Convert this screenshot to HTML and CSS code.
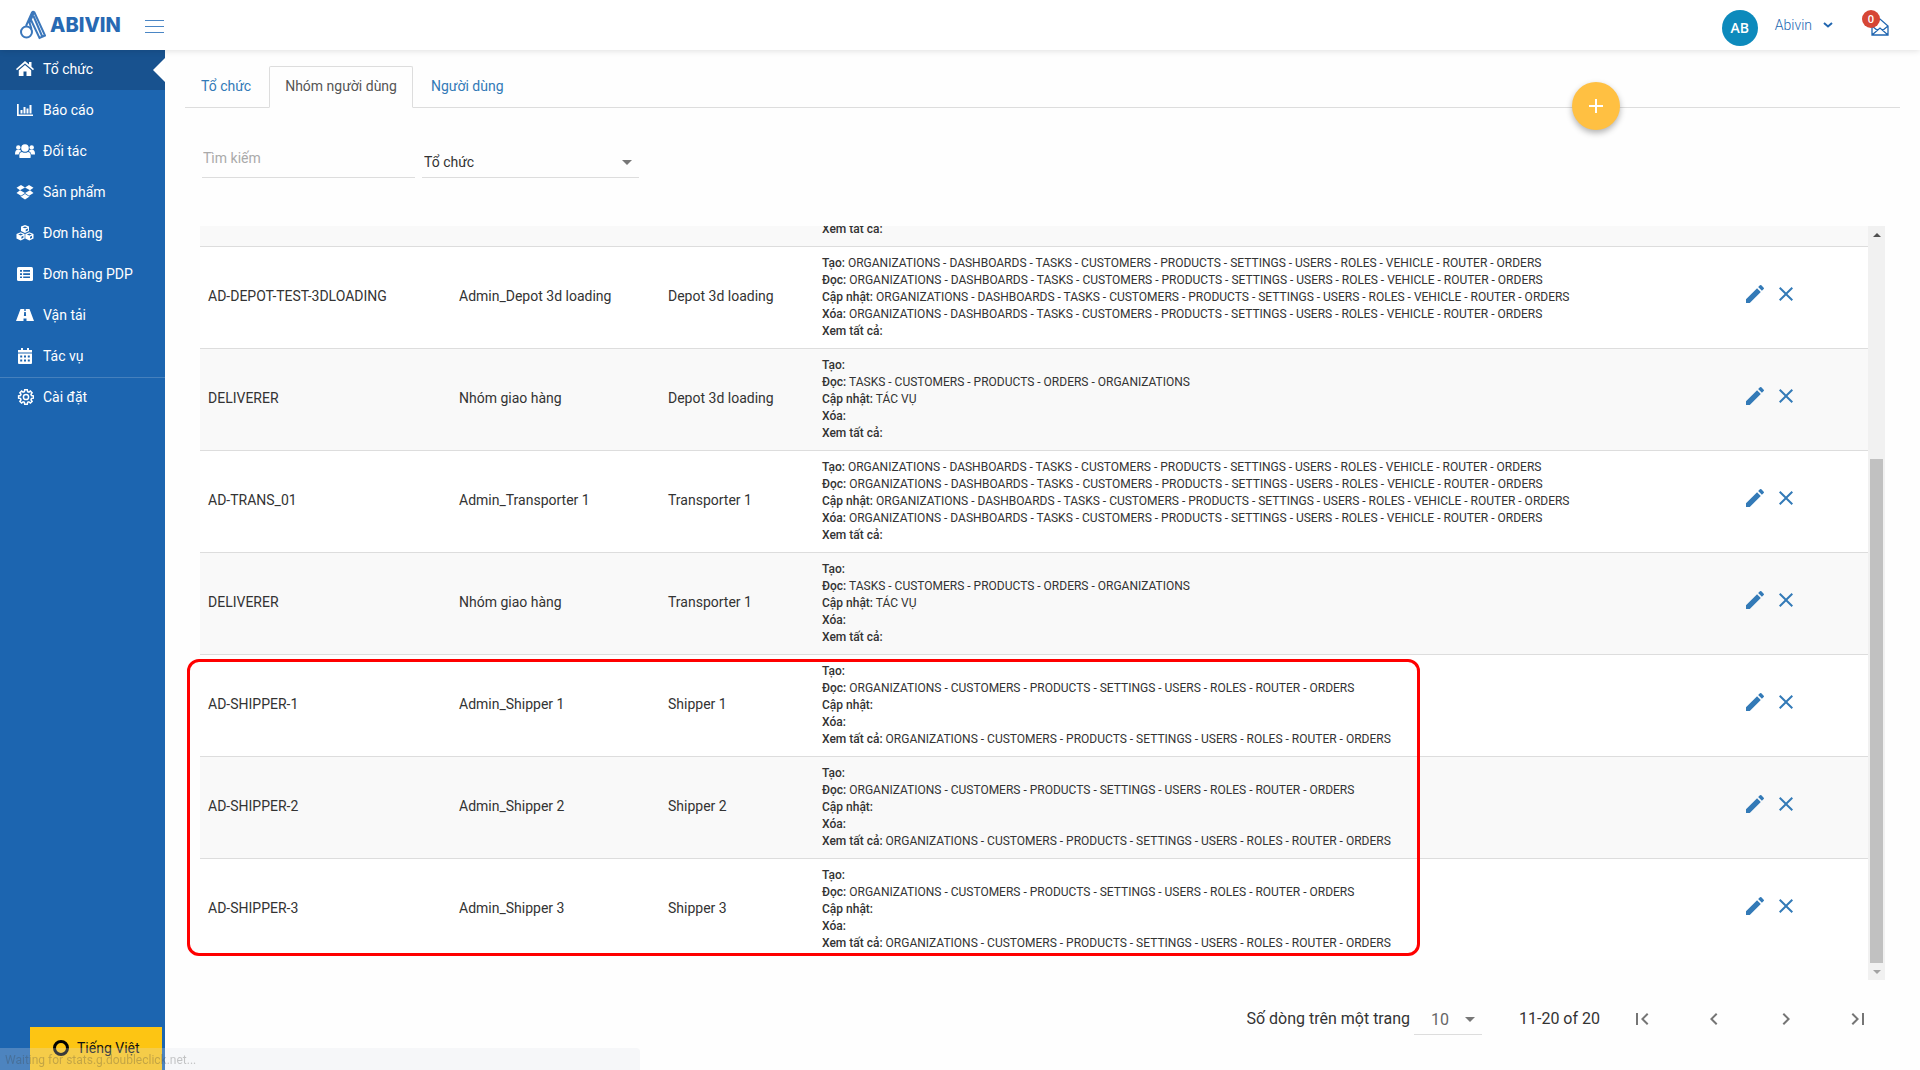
FILE: index.html
```html
<!DOCTYPE html>
<html lang="vi">
<head>
<meta charset="utf-8">
<title>Abivin - Nhóm người dùng</title>
<link rel="stylesheet" href="styles.css">
</head>
<body>
<svg class="sprite" aria-hidden="true">
  <symbol id="edit" viewBox="0 0 24 24"><path d="M3 17.25V21h3.75L17.81 9.94l-3.75-3.75L3 17.25zM20.71 7.04a1 1 0 0 0 0-1.41l-2.34-2.34a1 1 0 0 0-1.41 0l-1.83 1.83 3.75 3.75 1.83-1.83z"/></symbol>
  <symbol id="close" viewBox="0 0 24 24"><path d="M19 6.41 17.59 5 12 10.59 6.41 5 5 6.41 10.59 12 5 17.59 6.41 19 12 13.41 17.59 19 19 17.59 13.41 12z"/></symbol>
</svg>
<header class="topbar">
  <a class="logo" href="#">
    <svg width="26" height="30" viewBox="0 0 26 30" fill="none" stroke="#3b77bb" stroke-width="2"><circle cx="6.500" cy="22" r="5.500"/><path d="M6 16 12 2.500Q13 1 14.500 2.500L25 25.500 19.500 28 11 10M14 2.500 9.500 12.500 11.500 19M13.500 6 22 26"/></svg>
    <span>ABIVIN</span>
  </a>
  <button class="menu" aria-label="Menu"><i></i><i></i><i></i></button>
  <div class="account">
    <span class="avatar">AB</span>
    <button class="user">Abivin <svg width="10" height="6" viewBox="0 0 10 6" fill="none" stroke="#2166b0" stroke-width="2"><path d="M1 1l4 3.500L9 1"/></svg></button>
    <a class="mail" href="#" aria-label="Thông báo">
      <svg width="18" height="18" viewBox="0 0 18 18" fill="none" stroke="#2166b0" stroke-width="1.300"><path d="M1 8 9 1l8 7v9H1zM1 8l5.500 4.500M17 8l-5.500 4.500M1 17l8-7 8 7"/></svg>
      <b>0</b>
    </a>
  </div>
</header>
<div class="body">
  <nav class="sidebar">
    <ul>
      <li class="on"><a href="#"><svg viewBox="0 0 18 16"><path d="M9 0 0 8l1 1.200L9 2.500l8 6.700L18 8l-2.500-2.200V1H13v2.500zM9 4 2.800 9.200V15h4.700v-4.500h3V15h4.700V9.200z"/></svg>Tổ chức</a></li>
      <li><a href="#"><svg viewBox="0 0 18 16"><path d="M1 2h1.700v10.500H17V14H1zM4.500 8h2v3.500h-2zM7.500 5h2v6.500h-2zM10.500 6.500h2v5h-2zM13.500 3h2v8.500h-2z"/></svg>Báo cáo</a></li>
      <li><a href="#"><svg class="wide" viewBox="0 0 20 16"><circle cx="10" cy="5" r="3.800"/><circle cx="3.300" cy="4.500" r="2.200"/><circle cx="16.700" cy="4.500" r="2.200"/><path d="M4.500 15q-1-6 2.500-6 3 1.700 6 0 3.500 0 2.500 6zM0 11.500Q0 7 2 7h3.500l.5 1.200Q4 9 3.600 11.500zM20 11.500Q20 7 18 7h-3.500l-.5 1.200q2 .8 2.400 3.300z"/></svg>Đối tác</a></li>
      <li><a href="#"><svg viewBox="0 0 18 16"><path d="M5 1 .5 3.800 4 6.300 9 3.500zM13 1l4.500 2.800L14 6.300 9 3.500zM4 6.300.5 9 5 11.800 9 9zM14 6.300 17.500 9 13 11.800 9 9zM4 12.200 9 15.500l5-3.300-1 .3L9 10l-4 2.500z"/></svg>Sản phẩm</a></li>
      <li><a href="#"><svg viewBox="0 0 18 16"><path fill-rule="evenodd" d="M9 0l4 1.500V6L9 8 5 6V1.500zM6.500 2.400 9 3.300l2.500-.9L9 1.500zM9.700 4.500v2L12 5.300V3.600zM4.700 7.300l4 1.600v4.600l-4 2-4.200-2V8.900zM2.200 9.500l2.500.9 2.400-.9-2.400-.9zM5.400 11.700v2l2-1v-1.900zM13.300 7.300l4.200 1.600v4.600l-4.200 2-4-2V8.900zM10.900 9.500l2.400.9 2.500-.9-2.500-.9zM14 11.700v2l2-1v-1.900z"/></svg>Đơn hàng</a></li>
      <li><a href="#"><svg viewBox="0 0 18 16"><rect x="1" y="1" width="16" height="14" rx="1.500"/><g fill="#1c65b0"><path d="M4 4h2v1.700H4zM4 7.200h2v1.700H4zM4 10.400h2v1.700H4zM7.200 4H14v1.700H7.200zM7.200 7.200H14v1.700H7.200zM7.200 10.400H14v1.700H7.200z"/></g></svg>Đơn hàng PDP</a></li>
      <li><a href="#"><svg viewBox="0 0 18 16"><path fill-rule="evenodd" d="M4.500 2h3.800v2h1.400V2h3.800L18 14h-7.500v-2.500h-3V14H0zM8.200 5l-.3 4h2.200l-.3-4z"/></svg>Vận tải</a></li>
      <li class="last"><a href="#"><svg viewBox="0 0 18 16"><path fill-rule="evenodd" d="M2 2h3V0h2v2h4V0h2v2h3v2.500H2zM2 5.500h14V15q0 1-1 1H3q-1 0-1-1zM4.200 7.500v2h2v-2zM8 7.500v2h2v-2zM11.800 7.500v2h2v-2zM4.200 11.500v2h2v-2zM8 11.500v2h2v-2zM11.800 11.500v2h2v-2z"/></svg>Tác vụ</a></li>
      <li><a href="#"><svg class="line" viewBox="0 0 18 16"><circle cx="10" cy="8" r="2.600"/><path d="M8.700.8h2.600l.3 1.900 1.300.5 1.500-1.100 1.700 1.700L15 5.300l.5 1.300 1.900.3v2.300l-1.900.3-.5 1.300 1.100 1.500-1.700 1.700-1.500-1.100-1.300.5-.3 1.900H8.700l-.3-1.900-1.300-.5L5.600 14l-1.700-1.700L5 10.800l-.5-1.300-1.900-.3V6.900l1.900-.3L5 5.300 3.900 3.800l1.700-1.700 1.500 1.100 1.300-.5z"/></svg>Cài đặt</a></li>
    </ul>
    <button class="lang"><i></i>Tiếng Việt</button>
  </nav>
  <main>
    <ul class="tabs">
      <li><a href="#">Tổ chức</a></li>
      <li class="on"><a href="#">Nhóm người dùng</a></li>
      <li><a href="#">Người dùng</a></li>
    </ul>
    <button class="fab" aria-label="Thêm"><svg width="14" height="14" viewBox="0 0 14 14"><path fill="#fff" d="M6 0h2v6h6v2H8v6H6V8H0V6h6z"/></svg></button>
    <div class="filters">
      <input type="text" placeholder="Tìm kiếm" aria-label="Tìm kiếm">
      <div class="select"><select aria-label="Tổ chức"><option>Tổ chức</option></select></div>
    </div>
    <div class="grid">
      <div class="scroller">
        <table>
          <colgroup><col class="c-id"><col class="c-name"><col class="c-org"><col><col class="c-act"></colgroup>
          <tbody>
            <tr><td></td><td></td><td></td><td class="perm"><b>Xem tất cả:</b></td><td></td></tr>
            <tr><td>AD-DEPOT-TEST-3DLOADING</td><td>Admin_Depot 3d loading</td><td>Depot 3d loading</td>
              <td class="perm"><div><b>Tạo:</b> ORGANIZATIONS - DASHBOARDS - TASKS - CUSTOMERS - PRODUCTS - SETTINGS - USERS - ROLES - VEHICLE - ROUTER - ORDERS</div><div><b>Đọc:</b> ORGANIZATIONS - DASHBOARDS - TASKS - CUSTOMERS - PRODUCTS - SETTINGS - USERS - ROLES - VEHICLE - ROUTER - ORDERS</div><div><b>Cập nhật:</b> ORGANIZATIONS - DASHBOARDS - TASKS - CUSTOMERS - PRODUCTS - SETTINGS - USERS - ROLES - VEHICLE - ROUTER - ORDERS</div><div><b>Xóa:</b> ORGANIZATIONS - DASHBOARDS - TASKS - CUSTOMERS - PRODUCTS - SETTINGS - USERS - ROLES - VEHICLE - ROUTER - ORDERS</div><div><b>Xem tất cả:</b></div></td>
              <td class="act"><button aria-label="Sửa"><svg><use href="#edit"/></svg></button><button aria-label="Xóa"><svg><use href="#close"/></svg></button></td></tr>
            <tr><td>DELIVERER</td><td>Nhóm giao hàng</td><td>Depot 3d loading</td>
              <td class="perm"><div><b>Tạo:</b></div><div><b>Đọc:</b> TASKS - CUSTOMERS - PRODUCTS - ORDERS - ORGANIZATIONS</div><div><b>Cập nhật:</b> TÁC VỤ</div><div><b>Xóa:</b></div><div><b>Xem tất cả:</b></div></td>
              <td class="act"><button aria-label="Sửa"><svg><use href="#edit"/></svg></button><button aria-label="Xóa"><svg><use href="#close"/></svg></button></td></tr>
            <tr><td>AD-TRANS_01</td><td>Admin_Transporter 1</td><td>Transporter 1</td>
              <td class="perm"><div><b>Tạo:</b> ORGANIZATIONS - DASHBOARDS - TASKS - CUSTOMERS - PRODUCTS - SETTINGS - USERS - ROLES - VEHICLE - ROUTER - ORDERS</div><div><b>Đọc:</b> ORGANIZATIONS - DASHBOARDS - TASKS - CUSTOMERS - PRODUCTS - SETTINGS - USERS - ROLES - VEHICLE - ROUTER - ORDERS</div><div><b>Cập nhật:</b> ORGANIZATIONS - DASHBOARDS - TASKS - CUSTOMERS - PRODUCTS - SETTINGS - USERS - ROLES - VEHICLE - ROUTER - ORDERS</div><div><b>Xóa:</b> ORGANIZATIONS - DASHBOARDS - TASKS - CUSTOMERS - PRODUCTS - SETTINGS - USERS - ROLES - VEHICLE - ROUTER - ORDERS</div><div><b>Xem tất cả:</b></div></td>
              <td class="act"><button aria-label="Sửa"><svg><use href="#edit"/></svg></button><button aria-label="Xóa"><svg><use href="#close"/></svg></button></td></tr>
            <tr><td>DELIVERER</td><td>Nhóm giao hàng</td><td>Transporter 1</td>
              <td class="perm"><div><b>Tạo:</b></div><div><b>Đọc:</b> TASKS - CUSTOMERS - PRODUCTS - ORDERS - ORGANIZATIONS</div><div><b>Cập nhật:</b> TÁC VỤ</div><div><b>Xóa:</b></div><div><b>Xem tất cả:</b></div></td>
              <td class="act"><button aria-label="Sửa"><svg><use href="#edit"/></svg></button><button aria-label="Xóa"><svg><use href="#close"/></svg></button></td></tr>
            <tr><td>AD-SHIPPER-1</td><td>Admin_Shipper 1</td><td>Shipper 1</td>
              <td class="perm"><div><b>Tạo:</b></div><div><b>Đọc:</b> ORGANIZATIONS - CUSTOMERS - PRODUCTS - SETTINGS - USERS - ROLES - ROUTER - ORDERS</div><div><b>Cập nhật:</b></div><div><b>Xóa:</b></div><div><b>Xem tất cả:</b> ORGANIZATIONS - CUSTOMERS - PRODUCTS - SETTINGS - USERS - ROLES - ROUTER - ORDERS</div></td>
              <td class="act"><button aria-label="Sửa"><svg><use href="#edit"/></svg></button><button aria-label="Xóa"><svg><use href="#close"/></svg></button></td></tr>
            <tr><td>AD-SHIPPER-2</td><td>Admin_Shipper 2</td><td>Shipper 2</td>
              <td class="perm"><div><b>Tạo:</b></div><div><b>Đọc:</b> ORGANIZATIONS - CUSTOMERS - PRODUCTS - SETTINGS - USERS - ROLES - ROUTER - ORDERS</div><div><b>Cập nhật:</b></div><div><b>Xóa:</b></div><div><b>Xem tất cả:</b> ORGANIZATIONS - CUSTOMERS - PRODUCTS - SETTINGS - USERS - ROLES - ROUTER - ORDERS</div></td>
              <td class="act"><button aria-label="Sửa"><svg><use href="#edit"/></svg></button><button aria-label="Xóa"><svg><use href="#close"/></svg></button></td></tr>
            <tr><td>AD-SHIPPER-3</td><td>Admin_Shipper 3</td><td>Shipper 3</td>
              <td class="perm"><div><b>Tạo:</b></div><div><b>Đọc:</b> ORGANIZATIONS - CUSTOMERS - PRODUCTS - SETTINGS - USERS - ROLES - ROUTER - ORDERS</div><div><b>Cập nhật:</b></div><div><b>Xóa:</b></div><div><b>Xem tất cả:</b> ORGANIZATIONS - CUSTOMERS - PRODUCTS - SETTINGS - USERS - ROLES - ROUTER - ORDERS</div></td>
              <td class="act"><button aria-label="Sửa"><svg><use href="#edit"/></svg></button><button aria-label="Xóa"><svg><use href="#close"/></svg></button></td></tr>
          </tbody>
        </table>
      </div>
      <div class="scrollbar"><i class="up"></i><div class="track"><div class="thumb"></div></div><i class="down"></i></div>
      <div class="highlight"></div>
    </div>
    <footer class="pager">
      <label for="size">Số dòng trên một trang</label>
      <div class="select size"><select id="size"><option>10</option></select></div>
      <span class="range">11-20 of 20</span>
      <div class="pages">
        <button aria-label="Trang đầu"><svg viewBox="0 0 24 24"><path d="M18.410 16.590 13.820 12l4.590-4.590L17 6l-6 6 6 6zM6 6h2v12H6z"/></svg></button>
        <button aria-label="Trang trước"><svg viewBox="0 0 24 24"><path d="M15.410 7.410 14 6l-6 6 6 6 1.410-1.410L10.830 12z"/></svg></button>
        <button aria-label="Trang sau"><svg viewBox="0 0 24 24"><path d="M10 6 8.590 7.410 13.170 12l-4.580 4.590L10 18l6-6z"/></svg></button>
        <button aria-label="Trang cuối"><svg viewBox="0 0 24 24"><path d="M5.590 7.410 10.180 12l-4.590 4.590L7 18l6-6-6-6zM16 6h2v12h-2z"/></svg></button>
      </div>
    </footer>
  </main>
</div>
<div class="status">Waiting for stats.g.doubleclick.net...</div>
</body>
</html>
```
FILE: styles.css
```css
* { box-sizing: border-box; }
body {
  margin: 0;
  height: 100vh;
  display: flex;
  flex-direction: column;
  background: #fefefe;
  color: #333;
  font: 14px/20px Roboto, sans-serif;
  overflow: hidden;
}
ul { list-style: none; margin: 0; padding: 0; }
a { text-decoration: none; }
button { border: 0; padding: 0; background: none; font: inherit; cursor: pointer; }
.sprite { display: none; }

.topbar {
  position: relative;
  z-index: 1;
  flex: none;
  height: 50px;
  display: flex;
  align-items: center;
  padding: 0 31px 0 20px;
  background: #fff;
  box-shadow: 0 1px 6px rgba(0, 0, 0, .12);
}
.logo {
  display: flex;
  align-items: center;
  gap: 4px;
  color: #2769b3;
  font: 800 20px/24px Inter, sans-serif;
}
.menu { display: flex; flex-direction: column; gap: 5px; width: 19px; margin: 2px 0 0 24px; }
.menu i { height: 1px; background: #4a86c5; }
.account { display: flex; align-items: center; margin-left: auto; }
.avatar {
  width: 36px;
  height: 36px;
  margin-top: 6px;
  border-radius: 50%;
  background: #0d8abc;
  color: #fff;
  font: 600 14px/36px "Open Sans", sans-serif;
  text-align: center;
}
.user { display: flex; align-items: center; gap: 11px; margin-left: 17px; color: #2166b0; font-weight: 300; }
.mail { position: relative; height: 18px; margin: 3px 0 0 38px; }
.mail b {
  position: absolute;
  left: -9px;
  top: -8px;
  width: 18px;
  height: 18px;
  border-radius: 50%;
  background: #d64635;
  color: #fff;
  font: 600 11px/17px "Open Sans", sans-serif;
  text-align: center;
}

.body { flex: 1; min-height: 0; display: flex; }
.sidebar {
  flex: none;
  width: 165px;
  display: flex;
  flex-direction: column;
  justify-content: space-between;
  background: #1c65b0;
}
.sidebar li { border-bottom: 1px solid #1c65b0; }
.sidebar .last { border-bottom-color: #4580bd; }
.sidebar .on { position: relative; background: #18528f; }
.sidebar .on::after {
  content: "";
  position: absolute;
  right: 0;
  top: 8px;
  border: 12px solid transparent;
  border-left: 0;
  border-right-color: #fff;
}
.sidebar a {
  display: flex;
  align-items: center;
  gap: 9px;
  height: 40px;
  padding: 0 16px 2px;
  color: #fff;
  white-space: nowrap;
}
.sidebar svg { width: 18px; height: 16px; fill: #fff; }
.sidebar .wide { width: 20px; margin: 0 -1px; }
.sidebar .line { fill: none; stroke: #fff; stroke-width: 1.5; }
.lang {
  display: flex;
  align-items: center;
  gap: 8px;
  height: 43px;
  margin: 0 3px 0 30px;
  padding: 0 22px 2px 23px;
  background: #fdc513;
  color: #111;
  white-space: nowrap;
}
.lang i { flex: none; width: 16px; height: 16px; border: 3px solid #000; border-radius: 50%; }

main {
  position: relative;
  flex: 1;
  min-width: 0;
  display: flex;
  flex-direction: column;
  padding: 16px 20px 0;
}
.tabs { display: flex; border-bottom: 1px solid #ddd; }
.tabs li { margin: 0 2px -1px 0; }
.tabs a { display: block; padding: 9px 15px 11px; border: 1px solid transparent; color: #337ab7; }
.tabs .on a {
  border-color: #ddd #ddd #fefefe;
  border-radius: 2px 2px 0 0;
  background: #fefefe;
  color: #555;
}
.fab {
  position: absolute;
  right: 300px;
  top: 32px;
  width: 48px;
  height: 48px;
  display: flex;
  align-items: center;
  justify-content: center;
  border-radius: 50%;
  background: #ffc042;
  box-shadow: 0 3px 6px rgba(0, 0, 0, .3);
}
.filters { display: flex; gap: 7px; height: 40px; margin: 30px 17px 0; }
.filters input {
  width: 213px;
  border: 0;
  border-bottom: 1px solid #ddd;
  padding: 0 1px;
  background: none;
  color: #333;
  font: inherit;
}
.filters input::placeholder { color: #aaa; }
.select { position: relative; width: 217px; border-bottom: 1px solid #ddd; }
.select::after {
  content: "";
  position: absolute;
  right: 7px;
  bottom: 12px;
  border: 5px solid transparent;
  border-top-color: #777;
  border-bottom: 0;
}
.select select {
  width: 100%;
  height: 100%;
  appearance: none;
  border: 0;
  padding: 8px 2px 0;
  background: none;
  color: #333;
  font: inherit;
}

.grid { position: relative; flex: 1; min-height: 0; display: flex; margin: 48px 15px 0; }
.scroller {
  flex: 1;
  min-width: 0;
  display: flex;
  flex-direction: column;
  justify-content: flex-end;
  padding-bottom: 20px;
  overflow: hidden;
}
table { width: 100%; table-layout: fixed; border-collapse: separate; border-spacing: 0; }
.c-id { width: 251px; }
.c-name { width: 209px; }
.c-org { width: 154px; }
.c-act { width: 133px; }
td { padding: 8px 8px 12px; border-top: 1px solid #ddd; vertical-align: middle; white-space: nowrap; }
tr:nth-child(odd) { background: #f9f9f9; }
tr:nth-child(2n) { background: #fff; }
.perm { padding-bottom: 8px; font-size: 12px; line-height: 17px; }
.perm b { font-weight: 500; }
.act button { height: 24px; margin: 0 7px 4px 0; vertical-align: middle; }
.act svg { display: block; width: 24px; height: 24px; fill: #337ab7; }
.scrollbar { flex: none; width: 17px; display: flex; flex-direction: column; background: #f1f1f1; }
.scrollbar > i { display: flex; height: 17px; align-items: center; justify-content: center; }
.scrollbar > i::after { content: ""; border: 4px solid transparent; }
.scrollbar .up::after { border-top: 0; border-bottom-color: #505050; }
.scrollbar .down::after { border-bottom: 0; border-top-color: #a3a3a3; }
.track { flex: 1; display: flex; flex-direction: column; justify-content: flex-end; padding: 0 2px; }
.thumb { height: 70%; background: #c1c1c1; }
.highlight {
  position: absolute;
  left: -13px;
  bottom: 24px;
  width: 1233px;
  height: 297px;
  border: 3px solid #f00;
  border-radius: 12px;
}

.pager {
  flex: none;
  display: flex;
  align-items: center;
  justify-content: flex-end;
  height: 90px;
  padding: 0 30px 13px 0;
  font-size: 16px;
}
.pager .size { width: 68px; height: 32px; margin: 0 37px 0 4px; }
.size select { padding: 4px 17px 0; color: #666; }
.pages { display: flex; gap: 48px; margin-left: 30px; }
.pages svg { display: block; width: 24px; height: 24px; fill: #757575; }
.status {
  position: fixed;
  left: 0;
  bottom: 0;
  z-index: 2;
  width: 640px;
  max-width: 100%;
  height: 22px;
  padding-left: 5px;
  border-radius: 0 4px 0 0;
  background: rgba(222, 228, 236, .25);
  color: rgba(60, 60, 60, .28);
  font: 12px/24px Roboto, sans-serif;
}
```
